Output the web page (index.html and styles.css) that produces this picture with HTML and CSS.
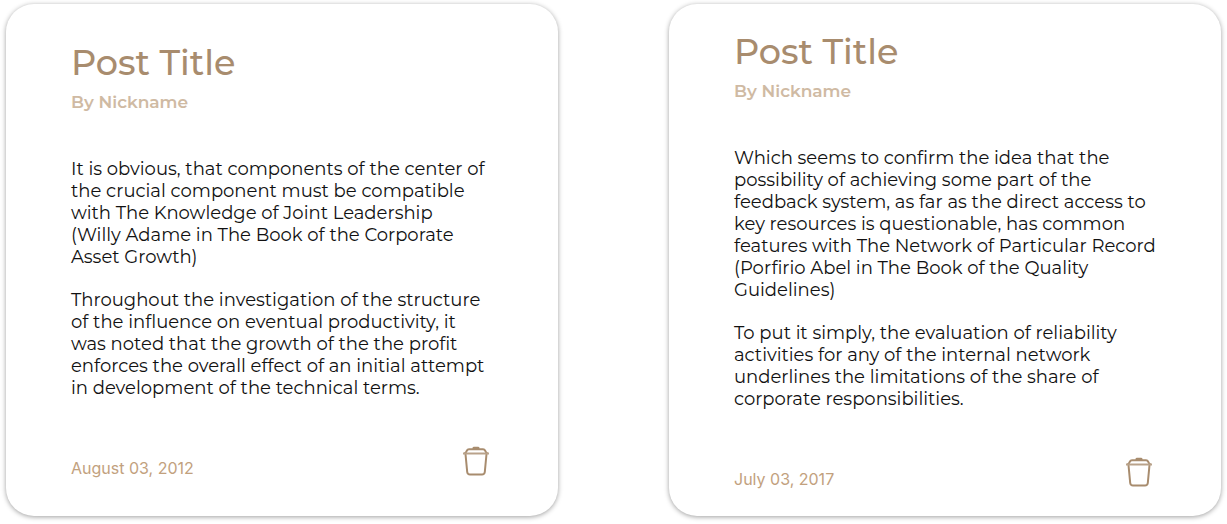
FILE: index.html
```html
<!DOCTYPE html>
<html lang="en">
<head>
<meta charset="utf-8">
<title>Posts</title>
<link rel="stylesheet" href="styles.css">
</head>
<body>
<main class="posts">
  <article class="card">
    <h2 class="title">Post Title</h2>
    <p class="author">By Nickname</p>
    <div class="body">
      <p>It is obvious, that components of the center of<br>the crucial component must be compatible<br>with The Knowledge of Joint Leadership<br>(Willy Adame in The Book of the Corporate<br>Asset Growth)</p>
      <p>Throughout the investigation of the structure<br>of the influence on eventual productivity, it<br>was noted that the growth of the the profit<br>enforces the overall effect of an initial attempt<br>in development of the technical terms.</p>
    </div>
    <footer class="footer">
      <time class="date" datetime="2012-08-03">August 03, 2012</time>
      <button class="delete" type="button" aria-label="Delete post"><svg class="icon" viewBox="0 0 28 30"><path d="M3.500 8L5.200 26Q5.500 28.500 8 28.500H20Q22.500 28.500 22.800 26L24.500 8M2.500 7.500Q4.300 6.300 4.800 4.700Q5.500 3.300 7 3.300H21Q22.500 3.300 23.200 4.700Q23.700 6.300 25.500 7.500"/><path class="rim" d="M1 7.500H27"/><path class="knob" d="M10.500 3V2Q10.500 .8 12 .8H16Q17.500 .8 17.500 2V3Z"/></svg></button>
    </footer>
  </article>
  <article class="card">
    <h2 class="title">Post Title</h2>
    <p class="author">By Nickname</p>
    <div class="body">
      <p>Which seems to confirm the idea that the<br>possibility of achieving some part of the<br>feedback system, as far as the direct access to<br>key resources is questionable, has common<br>features with The Network of Particular Record<br>(Porfirio Abel in The Book of the Quality<br>Guidelines)</p>
      <p>To put it simply, the evaluation of reliability<br>activities for any of the internal network<br>underlines the limitations of the share of<br>corporate responsibilities.</p>
    </div>
    <footer class="footer">
      <time class="date" datetime="2017-07-03">July 03, 2017</time>
      <button class="delete" type="button" aria-label="Delete post"><svg class="icon" viewBox="0 0 28 30"><path d="M3.500 8L5.200 26Q5.500 28.500 8 28.500H20Q22.500 28.500 22.800 26L24.500 8M2.500 7.500Q4.300 6.300 4.800 4.700Q5.500 3.300 7 3.300H21Q22.500 3.300 23.200 4.700Q23.700 6.300 25.500 7.500"/><path class="rim" d="M1 7.500H27"/><path class="knob" d="M10.500 3V2Q10.500 .8 12 .8H16Q17.500 .8 17.500 2V3Z"/></svg></button>
    </footer>
  </article>
</main>
</body>
</html>
```
FILE: styles.css
```css
* { box-sizing: border-box; }
body { margin: 0; background: #fff; font-family: Montserrat, Inter, sans-serif; }
.posts { display: grid; grid-template-columns: repeat(2, minmax(0, 1fr)); gap: 111px; padding: 4px 6px 8px; }
.card { display: flex; flex-direction: column; justify-content: center; min-height: 512px; padding: 24px 68px 26px 65px; border-radius: 28px; background: #fff; box-shadow: 0 1px 5px rgba(0, 0, 0, 0.38); }
.title { margin: 0; color: #a88c6e; font-size: 35px; line-height: 44px; font-weight: 500; }
.author { margin: 6px 0 0; color: #cfbaa3; font-size: 17px; line-height: 22px; font-weight: 600; }
.body { margin-top: 45px; color: #111; font-size: 18px; line-height: 22px; white-space: nowrap; }
.body p { margin: 0 0 21px; }
.footer { display: flex; justify-content: space-between; align-items: flex-end; margin-top: 26px; }
.date { color: #c2a17e; font-family: Inter, sans-serif; font-size: 16px; line-height: 20px; }
.delete { padding: 0 0 2px; border: 0; background: none; cursor: pointer; }
.icon { display: block; width: 28px; height: 30px; fill: none; stroke: #a88c6e; stroke-width: 2; }
.rim { stroke: #b9a28a; }
.knob { fill: #a88c6e; stroke: none; }
```
